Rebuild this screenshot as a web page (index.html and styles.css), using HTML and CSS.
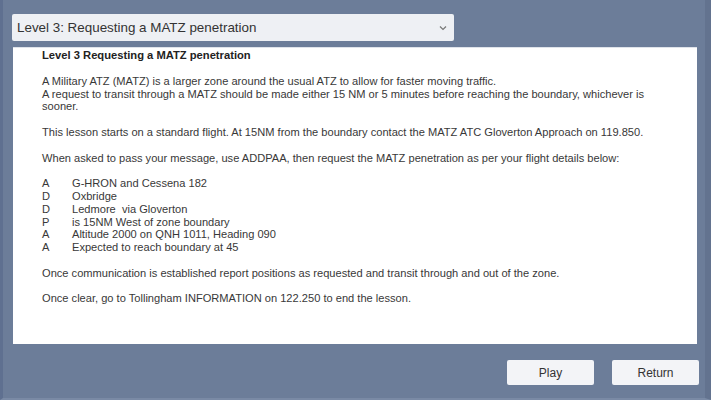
FILE: index.html
```html
<!DOCTYPE html>
<html>
<head>
<meta charset="utf-8">
<link rel="stylesheet" href="styles.css">
</head>
<body>
<div class="screen">
  <div class="select">
    <span class="select-text">Level 3: Requesting a MATZ penetration</span>
    <svg class="chevron" width="8" height="6" viewBox="0 0 8 6"><path d="M1 1.5 L4 4.5 L7 1.5" fill="none" stroke="#777" stroke-width="1.2"/></svg>
  </div>
  <div class="panel">
    <div class="title">Level 3 Requesting a MATZ penetration</div>
    <p>A Military ATZ (MATZ) is a larger zone around the usual ATZ to allow for faster moving traffic.<br>A request to transit through a MATZ should be made either 15 NM or 5 minutes before reaching the boundary, whichever is sooner.</p>
    <p>This lesson starts on a standard flight. At 15NM from the boundary contact the MATZ ATC Gloverton Approach on 119.850.</p>
    <p>When asked to pass your message, use ADDPAA, then request the MATZ penetration as per your flight details below:</p>
    <div class="list">
      <span>A</span><span>G-HRON and Cessena 182</span>
      <span>D</span><span>Oxbridge</span>
      <span>D</span><span>Ledmore&nbsp; via Gloverton</span>
      <span>P</span><span>is 15NM West of zone boundary</span>
      <span>A</span><span>Altitude 2000 on QNH 1011, Heading 090</span>
      <span>A</span><span>Expected to reach boundary at 45</span>
    </div>
    <p>Once communication is established report positions as requested and transit through and out of the zone.</p>
    <p>Once clear, go to Tollingham INFORMATION on 122.250 to end the lesson.</p>
  </div>
  <div class="buttons">
    <div class="btn">Play</div>
    <div class="btn">Return</div>
  </div>
</div>
</body>
</html>
```
FILE: styles.css
```css
html, body {
  margin: 0;
  padding: 0;
}
body {
  width: 711px;
  height: 400px;
  overflow: hidden;
  background: #6c7d99;
  font-family: "Liberation Sans", Arial, sans-serif;
}
.screen {
  box-sizing: border-box;
  width: 711px;
  height: 400px;
  border-left: 3px solid #5f7090;
  border-right: 6px solid #63738f;
  border-bottom: 2px solid #7a8aa5;
  display: flex;
  flex-direction: column;
}
.select {
  margin: 14px 0 0 9px;
  width: 442px;
  height: 27px;
  box-sizing: border-box;
  background: #eef0f4;
  border-radius: 2px;
  display: flex;
  align-items: center;
  justify-content: space-between;
  padding: 0 7px 0 5px;
  color: #333;
}
.select-text {
  font-size: 13.4px;
}
.chevron {
  display: block;
}
.panel {
  margin: 6px 0 0 10px;
  width: 684px;
  height: 297px;
  box-sizing: border-box;
  background: #fff;
  border-top: 1px solid #dfe3ea;
  padding: 0 26px 0 29px;
  color: #383838;
  font-size: 11.1px;
  line-height: 12.8px;
}
.title {
  font-weight: bold;
  font-size: 11.2px;
  line-height: 14px;
  color: #222;
  margin-top: 0;
}
.panel p {
  margin: 12.8px 0 0 0;
}
.list {
  margin-top: 12.8px;
  display: grid;
  grid-template-columns: 30px 1fr;
}
.buttons {
  display: flex;
  justify-content: flex-end;
  gap: 18px;
  margin: 16px 0 0 0;
  padding-right: 6px;
}
.btn {
  width: 87px;
  height: 25px;
  background: #f3f4f7;
  border-radius: 2px;
  display: flex;
  align-items: center;
  justify-content: center;
  font-size: 12px;
  color: #333;
}
```
